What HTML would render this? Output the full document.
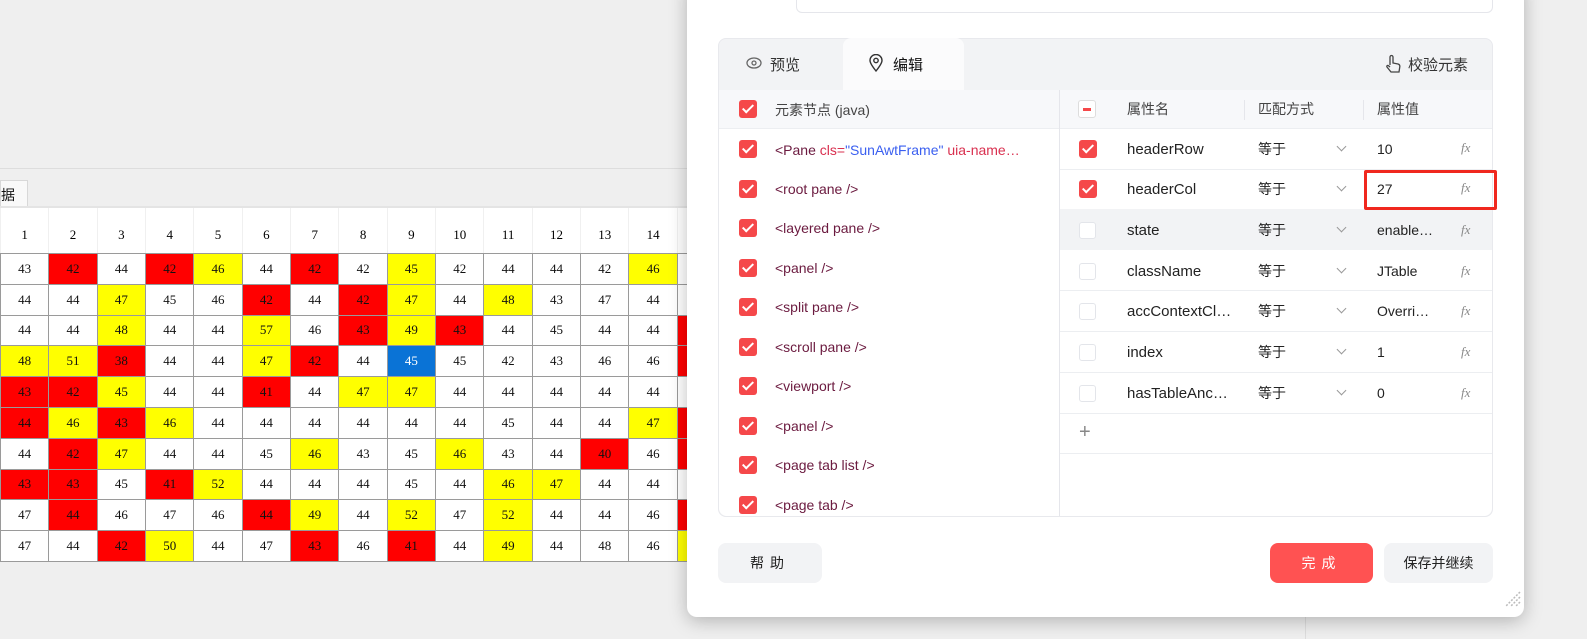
<!DOCTYPE html>
<html><head><meta charset="utf-8"><style>
*{box-sizing:border-box;margin:0;padding:0}
body{width:1587px;height:639px;overflow:hidden;background:#efefef;font-family:"Liberation Sans","Noto Sans CJK SC",sans-serif;position:relative}
.abs{position:absolute}
#grid{position:absolute;left:0;top:253px;display:grid;grid-template-columns:repeat(15,47.35px);grid-auto-rows:29.8px;gap:1px;background:#9a9a9a;padding:1px 0 1px 1px;width:720px}
#grid div{background:#fff;font-family:"Liberation Serif","Noto Serif CJK SC",serif;font-size:13px;color:#111;display:flex;align-items:center;justify-content:center}
#grid .r{background:#f00}#grid .y{background:#ff0}#grid .b{background:#0a73d6;color:#fff}
#hdr{position:absolute;left:0;top:208px;height:45px;display:grid;grid-template-columns:repeat(15,47.35px);gap:1px;background:#f0f0f0;padding-left:1px}
#hdr div{background:#fff;font-family:"Liberation Serif",serif;font-size:13px;display:flex;align-items:center;justify-content:center;padding-top:8px}
.dlg{position:absolute;left:687px;top:-20px;width:837px;height:637px;background:#fff;border-radius:10px;box-shadow:0 4px 18px rgba(0,0,0,.25)}
.cb{position:absolute;width:18px;height:18px;border-radius:3px;background:#f5484a}
.cb:after{content:"";position:absolute;left:6px;top:2px;width:4px;height:9px;border:solid #fff;border-width:0 2px 2px 0;transform:rotate(45deg)}
.cbe{position:absolute;width:17px;height:17px;border:1px solid #e3e5ea;border-radius:3px;background:#fff}
.t{position:absolute;font-size:14px;color:#222;white-space:nowrap}
.e{margin-top:2px}
.tag{color:#6b1a3f}
.fx{position:absolute;font-family:"Liberation Serif",serif;font-style:italic;color:#888;font-size:13px}
.chev{position:absolute;width:7px;height:7px;border:solid #999;border-width:0 1px 1px 0;transform:rotate(45deg)}
.btn{position:absolute;height:40px;border-radius:8px;display:flex;align-items:center;justify-content:center;font-size:14px}
</style></head><body>
<div class="abs" style="left:0;top:168px;width:690px;height:1px;background:#ddd"></div>
<div class="abs" style="left:0;top:180px;width:28px;height:27px;background:#f9f9f9;border:1px solid #d8d8d8;border-bottom:none;font-size:14px;padding:4px 0 0 0;color:#111">据</div>
<div class="abs" style="left:0;top:206px;width:690px;height:2px;background:#e4e4e4"></div>
<div id="hdr"><div>1</div><div>2</div><div>3</div><div>4</div><div>5</div><div>6</div><div>7</div><div>8</div><div>9</div><div>10</div><div>11</div><div>12</div><div>13</div><div>14</div><div></div></div>
<div id="grid">
<div>43</div><div class="r">42</div><div>44</div><div class="r">42</div><div class="y">46</div><div>44</div><div class="r">42</div><div>42</div><div class="y">45</div><div>42</div><div>44</div><div>44</div><div>42</div><div class="y">46</div><div></div>
<div>44</div><div>44</div><div class="y">47</div><div>45</div><div>46</div><div class="r">42</div><div>44</div><div class="r">42</div><div class="y">47</div><div>44</div><div class="y">48</div><div>43</div><div>47</div><div>44</div><div></div>
<div>44</div><div>44</div><div class="y">48</div><div>44</div><div>44</div><div class="y">57</div><div>46</div><div class="r">43</div><div class="y">49</div><div class="r">43</div><div>44</div><div>45</div><div>44</div><div>44</div><div class="r"></div>
<div class="y">48</div><div class="y">51</div><div class="r">38</div><div>44</div><div>44</div><div class="y">47</div><div class="r">42</div><div>44</div><div class="b">45</div><div>45</div><div>42</div><div>43</div><div>46</div><div>46</div><div class="r"></div>
<div class="r">43</div><div class="r">42</div><div class="y">45</div><div>44</div><div>44</div><div class="r">41</div><div>44</div><div class="y">47</div><div class="y">47</div><div>44</div><div>44</div><div>44</div><div>44</div><div>44</div><div></div>
<div class="r">44</div><div class="y">46</div><div class="r">43</div><div class="y">46</div><div>44</div><div>44</div><div>44</div><div>44</div><div>44</div><div>44</div><div>45</div><div>44</div><div>44</div><div class="y">47</div><div class="r"></div>
<div>44</div><div class="r">42</div><div class="y">47</div><div>44</div><div>44</div><div>45</div><div class="y">46</div><div>43</div><div>45</div><div class="y">46</div><div>43</div><div>44</div><div class="r">40</div><div>46</div><div class="r"></div>
<div class="r">43</div><div class="r">43</div><div>45</div><div class="r">41</div><div class="y">52</div><div>44</div><div>44</div><div>44</div><div>45</div><div>44</div><div class="y">46</div><div class="y">47</div><div>44</div><div>44</div><div></div>
<div>47</div><div class="r">44</div><div>46</div><div>47</div><div>46</div><div class="r">44</div><div class="y">49</div><div>44</div><div class="y">52</div><div>47</div><div class="y">52</div><div>44</div><div>44</div><div>46</div><div class="r"></div>
<div>47</div><div>44</div><div class="r">42</div><div class="y">50</div><div>44</div><div>47</div><div class="r">43</div><div>46</div><div class="r">41</div><div>44</div><div class="y">49</div><div>44</div><div>48</div><div>46</div><div class="y"></div>
</div>
<div class="abs" style="left:1305px;top:0;width:1px;height:639px;background:#ddd"></div>

<div class="dlg"></div>
<div class="abs" style="left:796px;top:-10px;width:697px;height:23px;border:1px solid #e5e6eb;border-radius:6px;background:#fff"></div>
<div class="abs" style="left:718px;top:38px;width:775px;height:479px;background:#f2f3f5;border-radius:8px;border:1px solid #e8e9ed"></div>
<div class="abs" style="left:843px;top:38px;width:121px;height:53px;background:#fbfbfc;border-radius:8px 8px 0 0"></div>
<svg class="abs" style="left:746px;top:56px" width="16" height="14" viewBox="0 0 16 14"><ellipse cx="8" cy="7" rx="7" ry="5" fill="none" stroke="#666" stroke-width="1.3"/><circle cx="8" cy="7" r="2" fill="none" stroke="#666" stroke-width="1.3"/></svg>
<div class="t" style="left:770px;top:54px;font-size:15px;color:#333">预览</div>
<svg class="abs" style="left:868px;top:54px" width="16" height="18" viewBox="0 0 16 18"><path d="M8 17C4 12 2 9 2 6.5a6 6 0 0 1 12 0C14 9 12 12 8 17z" fill="none" stroke="#333" stroke-width="1.4"/><circle cx="8" cy="6.5" r="2.2" fill="none" stroke="#333" stroke-width="1.4"/></svg>
<div class="t" style="left:893px;top:54px;font-size:15px;color:#111">编辑</div>
<svg class="abs" style="left:1384px;top:54px" width="18" height="20" viewBox="0 0 18 20"><path d="M6 11V3a1.5 1.5 0 0 1 3 0v6l5 1c1.5.4 2 1.3 1.8 2.8L15 18H7l-4-5c-.6-1 .4-2 1.4-1.4L6 13" fill="none" stroke="#444" stroke-width="1.3"/></svg>
<div class="t" style="left:1408px;top:54px;font-size:15px;color:#333">校验元素</div>
<div class="abs" style="left:719px;top:90px;width:340px;height:426px;background:#fff;border-radius:0 0 0 8px"></div>
<div class="abs" style="left:719px;top:90px;width:340px;height:39px;background:#f7f8fa;border-bottom:1px solid #eceef1"></div>
<div class="cb" style="left:739px;top:100px"></div>
<div class="t" style="left:775px;top:100px;color:#444">元素节点 (java)</div>
<div class="cb" style="left:739px;top:140px"></div><div class="t tag e" style="left:775px;top:140px">&lt;Pane <span style="color:#d9304f">cls=</span><span style="color:#3a5ff0">"SunAwtFrame"</span> <span style="color:#d9304f">uia-name…</span></div>
<div class="cb" style="left:739px;top:180px"></div><div class="t tag e" style="left:775px;top:179px">&lt;root pane /&gt;</div>
<div class="cb" style="left:739px;top:219px"></div><div class="t tag e" style="left:775px;top:218px">&lt;layered pane /&gt;</div>
<div class="cb" style="left:739px;top:259px"></div><div class="t tag e" style="left:775px;top:258px">&lt;panel /&gt;</div>
<div class="cb" style="left:739px;top:298px"></div><div class="t tag e" style="left:775px;top:297px">&lt;split pane /&gt;</div>
<div class="cb" style="left:739px;top:338px"></div><div class="t tag e" style="left:775px;top:337px">&lt;scroll pane /&gt;</div>
<div class="cb" style="left:739px;top:377px"></div><div class="t tag e" style="left:775px;top:376px">&lt;viewport /&gt;</div>
<div class="cb" style="left:739px;top:417px"></div><div class="t tag e" style="left:775px;top:416px">&lt;panel /&gt;</div>
<div class="cb" style="left:739px;top:456px"></div><div class="t tag e" style="left:775px;top:455px">&lt;page tab list /&gt;</div>
<div class="cb" style="left:739px;top:496px"></div><div class="t tag e" style="left:775px;top:495px">&lt;page tab /&gt;</div>
<div class="abs" style="left:1059px;top:90px;width:433px;height:426px;background:#fff;border-left:1px solid #e5e6eb;border-radius:0 0 8px 0"></div>
<div class="abs" style="left:1060px;top:90px;width:432px;height:39px;background:#f7f8fa;border-bottom:1px solid #eceef1"></div>
<div class="abs" style="left:1078px;top:100px;width:18px;height:18px;border:1px solid #ddd;border-radius:3px;background:#fff"><div style="margin:7px 0 0 4px;width:8px;height:3px;background:#f5484a"></div></div>
<div class="t" style="left:1127px;top:99px;color:#444">属性名</div>
<div class="abs" style="left:1244px;top:100px;width:1px;height:20px;background:#e5e6eb"></div>
<div class="t" style="left:1258px;top:99px;color:#444">匹配方式</div>
<div class="abs" style="left:1363px;top:100px;width:1px;height:20px;background:#e5e6eb"></div>
<div class="t" style="left:1377px;top:99px;color:#444">属性值</div>
<div class="abs" style="left:1060px;top:209px;width:432px;height:41px;background:#f2f3f5"></div>
<div class="abs" style="left:1060px;top:169px;width:432px;height:1px;background:#eceef1"></div>
<div class="abs" style="left:1060px;top:290px;width:432px;height:1px;background:#eceef1"></div>
<div class="abs" style="left:1060px;top:331px;width:432px;height:1px;background:#eceef1"></div>
<div class="abs" style="left:1060px;top:372px;width:432px;height:1px;background:#eceef1"></div>
<div class="abs" style="left:1060px;top:413px;width:432px;height:1px;background:#eceef1"></div>
<div class="abs" style="left:1060px;top:453px;width:432px;height:1px;background:#eceef1"></div>

<div class="cb" style="left:1079px;top:140px"></div><div class="t e" style="left:1127px;top:139px;font-size:15px">headerRow</div><div class="t" style="left:1258px;top:139px">等于</div><div class="chev" style="left:1338px;top:143px"></div><div class="t e" style="left:1377px;top:139px">10</div><div class="fx" style="left:1461px;top:140px">fx</div>
<div class="cb" style="left:1079px;top:180px"></div><div class="t e" style="left:1127px;top:179px;font-size:15px">headerCol</div><div class="t" style="left:1258px;top:179px">等于</div><div class="chev" style="left:1338px;top:183px"></div><div class="t e" style="left:1377px;top:179px">27</div><div class="fx" style="left:1461px;top:180px">fx</div>
<div class="abs" style="left:1364px;top:170px;width:133px;height:40px;border:3px solid #f0281e;border-radius:2px"></div>
<div class="cbe" style="left:1079px;top:222px"></div><div class="t e" style="left:1127px;top:220px;font-size:15px">state</div><div class="t" style="left:1258px;top:220px">等于</div><div class="chev" style="left:1338px;top:224px"></div><div class="t e" style="left:1377px;top:220px">enable…</div><div class="fx" style="left:1461px;top:222px">fx</div>
<div class="cbe" style="left:1079px;top:263px"></div><div class="t e" style="left:1127px;top:261px;font-size:15px">className</div><div class="t" style="left:1258px;top:261px">等于</div><div class="chev" style="left:1338px;top:265px"></div><div class="t e" style="left:1377px;top:261px">JTable</div><div class="fx" style="left:1461px;top:263px">fx</div>
<div class="cbe" style="left:1079px;top:303px"></div><div class="t e" style="left:1127px;top:301px;font-size:15px">accContextCl…</div><div class="t" style="left:1258px;top:301px">等于</div><div class="chev" style="left:1338px;top:305px"></div><div class="t e" style="left:1377px;top:301px">Overri…</div><div class="fx" style="left:1461px;top:303px">fx</div>
<div class="cbe" style="left:1079px;top:344px"></div><div class="t e" style="left:1127px;top:342px;font-size:15px">index</div><div class="t" style="left:1258px;top:342px">等于</div><div class="chev" style="left:1338px;top:346px"></div><div class="t e" style="left:1377px;top:342px">1</div><div class="fx" style="left:1461px;top:344px">fx</div>
<div class="cbe" style="left:1079px;top:385px"></div><div class="t e" style="left:1127px;top:383px;font-size:15px">hasTableAnc…</div><div class="t" style="left:1258px;top:383px">等于</div><div class="chev" style="left:1338px;top:387px"></div><div class="t e" style="left:1377px;top:383px">0</div><div class="fx" style="left:1461px;top:385px">fx</div>
<div class="t" style="left:1079px;top:421px;font-size:20px;color:#888">+</div>
<div class="btn" style="left:718px;top:543px;width:104px;background:#f2f3f5;color:#222;letter-spacing:6px">帮助</div>
<div class="btn" style="left:1270px;top:543px;width:103px;background:#ff5252;color:#fff;letter-spacing:6px">完成</div>
<div class="btn" style="left:1384px;top:543px;width:109px;background:#f2f3f5;color:#222">保存并继续</div>
<svg class="abs" style="left:1502px;top:588px" width="20" height="20" viewBox="0 0 20 20"><path d="M18 4L4 18M18 9L9 18M18 14L14 18" stroke="#bbb" stroke-width="1.5" stroke-dasharray="2 1.5"/></svg>
</body></html>
